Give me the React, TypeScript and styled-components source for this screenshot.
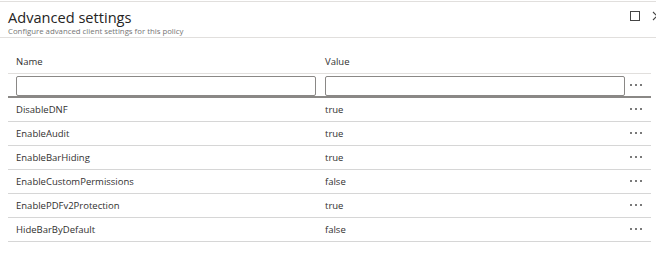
import React from "react";
import styled, { createGlobalStyle } from "styled-components";

const Global = createGlobalStyle`
  html, body { margin: 0; padding: 0; background: #ffffff; }
  body { font-family: "Open Sans", "Noto Sans", sans-serif; color: #323130; }
  * { box-sizing: border-box; }
`;

const Blade = styled.div`
  width: 656px;
  height: 264px;
  overflow: hidden;
  border-top: 1px solid #e1dfdd;
  margin-top: 1px;
`;

const Header = styled.div`
  display: flex;
  justify-content: space-between;
  align-items: flex-start;
  height: 36px;
  border-bottom: 1px solid #e1dfdd;
  padding: 6px 0 0 8px;
`;

const TitleBlock = styled.div`
  display: flex;
  flex-direction: column;
`;

const Title = styled.h1`
  margin: 0;
  font-size: 14.6px;
  font-weight: 400;
  line-height: 18px;
  color: #252423;
`;

const Subtitle = styled.div`
  font-size: 7.8px;
  line-height: 10px;
  color: #757575;
`;

const Controls = styled.div`
  display: flex;
  gap: 12px;
  padding-top: 3px;
  margin-right: -6px;
`;

const MaxIcon = styled.span`
  display: block;
  width: 10px;
  height: 10px;
  border: 1px solid #444;
`;

const CloseIcon = () => (
  <svg width="10" height="10" viewBox="0 0 10 10" aria-label="Close">
    <path d="M1 1 L9 9 M9 1 L1 9" stroke="#444" strokeWidth="1.1" fill="none" />
  </svg>
);

const Table = styled.div`
  display: grid;
  grid-template-columns: 309px 309px 25px;
  margin: 12px 5px 0 8px;
`;

const HeadCell = styled.div`
  height: 24px;
  padding: 0 0 0 8px;
  display: flex;
  align-items: center;
  font-size: 9.5px;
  color: #323130;
  border-bottom: 1px solid #e1dfdd;
`;

const FilterCell = styled.div<{ $pad?: number }>`
  height: 24px;
  padding: 2px 0 0 ${(p) => p.$pad ?? 8}px;
  border-bottom: 2px solid #8a8886;
`;

const Input = styled.input`
  display: block;
  width: 300px;
  height: 20px;
  margin: 0;
  border: 1px solid #8a8886;
  border-radius: 2px;
  background: #fff;
  padding: 0 4px;
  font-family: inherit;
  font-size: 9.5px;
  outline: none;
`;

const Cell = styled.div`
  height: 24px;
  padding: 0 0 1px 8px;
  display: flex;
  align-items: center;
  font-size: 9.5px;
  color: #323130;
  border-bottom: 1px solid #d6d6d6;
`;

const ActionCell = styled(Cell)`
  padding-left: 4px;
`;

const Dots = styled.span<{ $top?: number }>`
  display: flex;
  gap: 3px;
  margin-top: ${(p) => p.$top ?? 0}px;
`;

const Dot = styled.span`
  width: 2px;
  height: 2px;
  background: #7a7a7a;
`;

const More = ({ top }: { top?: number }) => (
  <Dots $top={top}>
    <Dot />
    <Dot />
    <Dot />
  </Dots>
);

const rows: [string, string][] = [
  ["DisableDNF", "true"],
  ["EnableAudit", "true"],
  ["EnableBarHiding", "true"],
  ["EnableCustomPermissions", "false"],
  ["EnablePDFv2Protection", "true"],
  ["HideBarByDefault", "false"],
];

export default function App() {
  return (
    <>
      <Global />
      <Blade>
        <Header>
          <TitleBlock>
            <Title>Advanced settings</Title>
            <Subtitle>Configure advanced client settings for this policy</Subtitle>
          </TitleBlock>
          <Controls>
            <MaxIcon />
            <CloseIcon />
          </Controls>
        </Header>
        <Table>
          <HeadCell>Name</HeadCell>
          <HeadCell>Value</HeadCell>
          <HeadCell />
          <FilterCell>
            <Input aria-label="Name filter" />
          </FilterCell>
          <FilterCell>
            <Input aria-label="Value filter" />
          </FilterCell>
          <FilterCell $pad={4}>
            <More top={8} />
          </FilterCell>
          {rows.map(([n, v]) => (
            <React.Fragment key={n}>
              <Cell>{n}</Cell>
              <Cell>{v}</Cell>
              <ActionCell>
                <More />
              </ActionCell>
            </React.Fragment>
          ))}
        </Table>
      </Blade>
    </>
  );
}
